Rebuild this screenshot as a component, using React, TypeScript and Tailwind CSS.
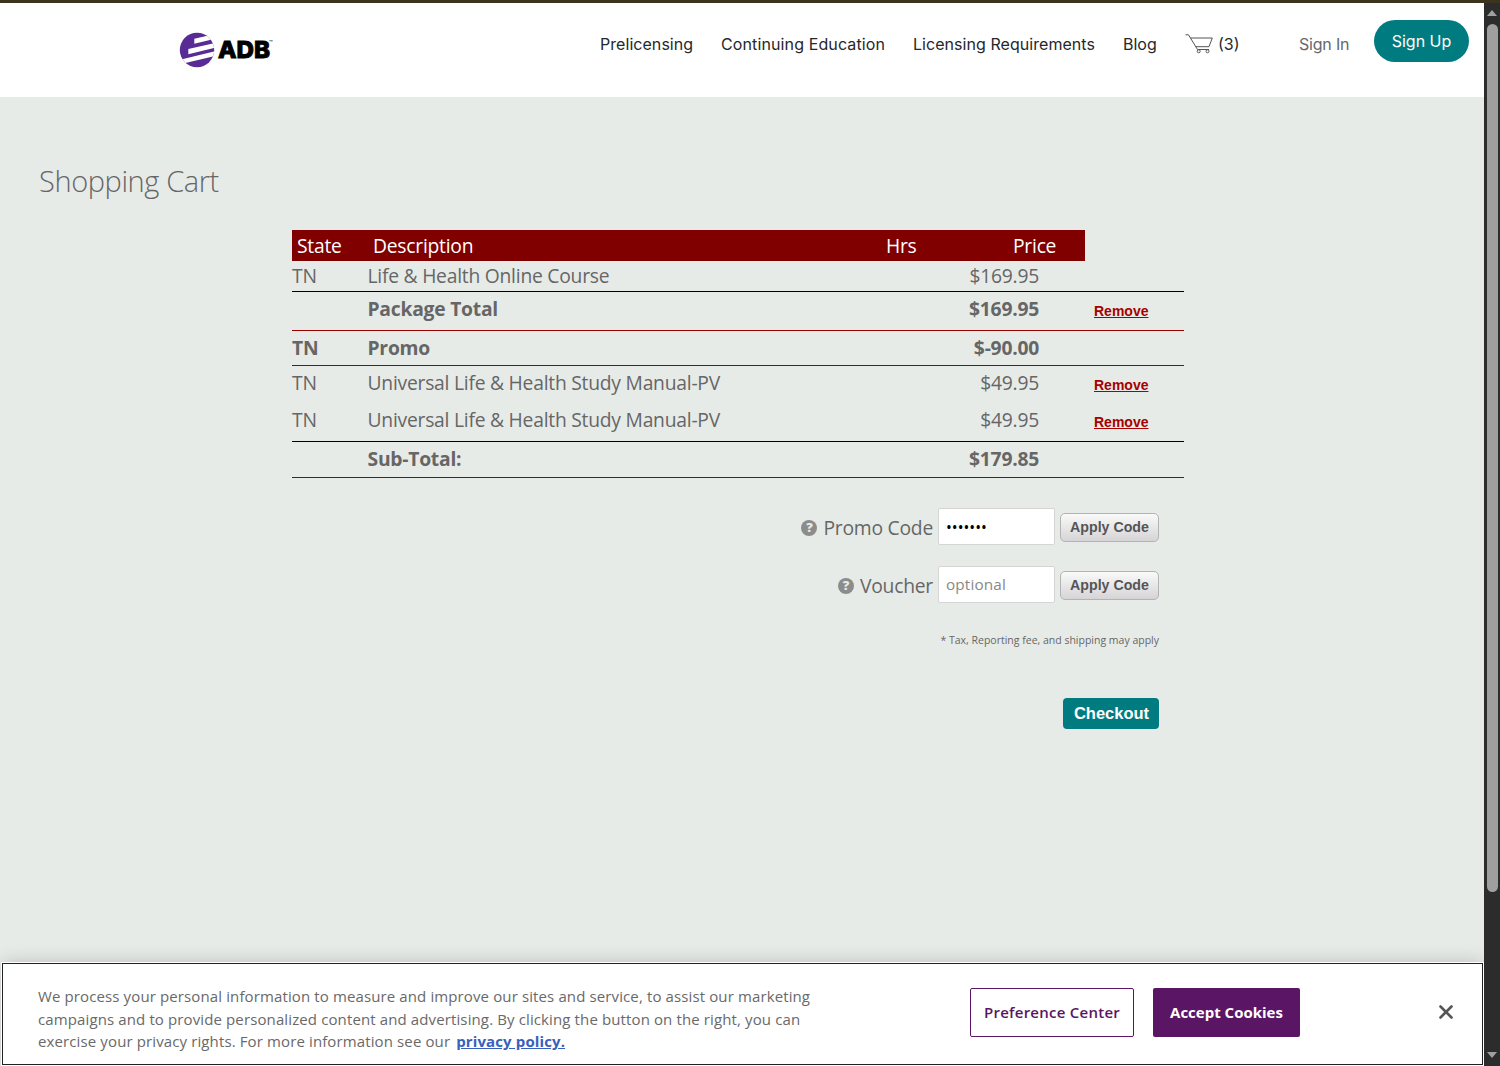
import { ReactNode } from "react";
import { clsx } from "clsx";

type CartRow = {
  state?: string;
  description: string;
  price: string;
  removable?: boolean;
  className: string;
};

const rows: CartRow[] = [
  { state: "TN", description: "Life & Health Online Course", price: "$169.95", className: "h-[31px] border-b border-black" },
  { description: "Package Total", price: "$169.95", removable: true, className: "h-[39px] pb-1 font-bold border-b border-[#990000]" },
  { state: "TN", description: "Promo", price: "$-90.00", className: "h-[35px] font-bold border-b border-[#990000]" },
  { state: "TN", description: "Universal Life & Health Study Manual-PV", price: "$49.95", removable: true, className: "h-[38px] pb-1" },
  { state: "TN", description: "Universal Life & Health Study Manual-PV", price: "$49.95", removable: true, className: "h-[38px] pb-[6px] border-b border-black" },
  { description: "Sub-Total:", price: "$179.85", className: "h-[36px] pb-[2px] font-bold border-b border-[#990000]" },
];

function Logo() {
  return (
    <svg width="96" height="38" viewBox="0 0 96 38" className="ml-[179px] mt-[28px] shrink-0">
      <defs>
        <clipPath id="globe">
          <ellipse cx="18" cy="19" rx="17.2" ry="17.2" />
        </clipPath>
      </defs>
      <g clipPath="url(#globe)">
        <rect width="36" height="38" fill="#592c95" />
        <path d="M15.3 7.800L36 3V7.800L15.300 12.700Z" fill="#fff" />
        <path d="M9.300 18L36 12V16.800L9.300 23.300Z" fill="#fff" />
        <path d="M0 29L36 20.300V25L0 33.500Z" fill="#fff" />
      </g>
      <text x="39" y="27" textLength="52" lengthAdjust="spacingAndGlyphs" fontFamily="Inter, sans-serif" fontWeight="800" fontSize="23.500" stroke="#000" strokeWidth="0.900">ADB</text>
      <text x="90" y="13.500" fontFamily="Inter, sans-serif" fontSize="6">™</text>
    </svg>
  );
}

function CartIcon() {
  return (
    <svg width="28" height="20" viewBox="0 0 28 20" fill="none" stroke="#555" strokeWidth="1">
      <path d="M0.500 0.800H3.500L12.500 15.500H24M5.500 4H27.300L24 12.700H10.800" />
      <circle cx="13.700" cy="17.300" r="1.500" />
      <circle cx="22.500" cy="17.300" r="1.500" />
    </svg>
  );
}

function Header() {
  return (
    <header className="flex h-[94px] shrink-0 bg-white font-['Inter'] text-[16px] leading-[22px] text-[#26272b]">
      <Logo />
      <nav className="ml-[325px] mt-[30px] flex h-[22px] items-center whitespace-nowrap">
        <a className="w-[121px] tracking-[0.05px]">Prelicensing</a>
        <a className="w-[192px] tracking-[0.12px]">Continuing Education</a>
        <a className="w-[210px] tracking-[0.05px]">Licensing Requirements</a>
        <a className="w-[62px]">Blog</a>
        <a className="flex w-[114px] items-center gap-[5px]"><CartIcon />(3)</a>
        <a className="w-[75px] tracking-[-0.2px] text-[#65676b]">Sign In</a>
      </nav>
      <button className="mt-[17px] h-[42px] w-[95px] rounded-full bg-[#007c80] text-white">Sign Up</button>
    </header>
  );
}

function CartTable() {
  return (
    <section className="ml-[292px] mt-[28px] w-[892px] text-[19.300px] leading-[26px] tracking-[-0.240px]">
      <div className="flex h-[31px] w-[793px] items-center bg-[#800000] text-white">
        <span className="w-[81px] pl-[5px]">State</span>
        <span className="w-[513px]">Description</span>
        <span className="w-[127px]">Hrs</span>
        <span>Price</span>
      </div>
      {rows.map((row, i) => (
        <div key={i} className={clsx("flex items-center", row.className)}>
          <span className="w-[75.500px]">{row.state}</span>
          <span className="w-[571.500px]">{row.description}</span>
          <span className="w-[100px] text-right">{row.price}</span>
          {row.removable && (
            <a className="ml-[55px] mt-1 font-['Liberation_Sans'] text-[14px] font-bold leading-5 tracking-normal text-[#a60000] underline">Remove</a>
          )}
        </div>
      ))}
    </section>
  );
}

function CodeRow({ label, children }: { label: string; children: ReactNode }) {
  return (
    <div className="flex h-[37px] items-center justify-end">
      <span className="mr-[6px] mt-[2px] flex size-4 items-center justify-center rounded-full bg-[#8c8c8c] font-['Open_Sans'] text-[13px] font-extrabold leading-none text-[#e6ebe8]">?</span>
      <label className="mr-[5px] mt-[3px] text-[19.300px] tracking-[-0.240px]">{label}</label>
      {children}
      <button className="ml-[5px] mt-[2px] h-[29px] w-[99px] rounded-[5px] border border-[#b3b3b3] bg-linear-to-b from-[#fafafa] to-[#d6d4d6] font-['Liberation_Sans'] text-[14.200px] font-bold text-[#555]">Apply Code</button>
    </div>
  );
}

function CookieBanner() {
  return (
    <div className="mb-[1px] ml-[2px] mr-[1px] flex h-[102px] shrink-0 border border-[#222] bg-white shadow-[0_0_18px_rgba(0,0,0,0.2)] outline outline-white">
      <p className="ml-[35px] mt-[21px] w-[800px] text-[15px] leading-[22.700px] tracking-[0.120px] text-[#696969]">
        We process your personal information to measure and improve our sites and service, to assist our marketing
        <br />
        campaigns and to provide personalized content and advertising. By clicking the button on the right, you can
        <br />
        exercise your privacy rights. For more information see our <a className="ml-[2px] font-bold text-[#3860be] underline">privacy policy.</a>
      </p>
      <button className="ml-[132px] mt-6 h-[49px] w-[164px] rounded-[2px] border border-[#5a1664] text-[15px] font-semibold tracking-[0.250px] text-[#5a1664]">Preference Center</button>
      <button className="ml-[19px] mt-6 h-[49px] w-[147px] rounded-[2px] bg-[#5a1664] text-[15px] font-bold text-white">Accept Cookies</button>
      <svg width="14" height="14" viewBox="0 0 14 14" className="ml-[139px] mt-[41px]" stroke="#565656" strokeWidth="2.600" strokeLinecap="round">
        <path d="M1.500 1.500L12.500 12.500M12.500 1.500L1.500 12.500" />
      </svg>
    </div>
  );
}

function Scrollbar() {
  return (
    <div className="flex w-4 shrink-0 flex-col items-center bg-[#2c2c2c]">
      <svg width="10" height="6" viewBox="0 0 10 6" className="mt-[7px] shrink-0" fill="#a0a0a0"><path d="M5 0L10 6H0Z" /></svg>
      <div className="ml-[1px] mt-2 h-[868px] w-[11px] rounded-full bg-[#9f9f9f]" />
      <svg width="10" height="6" viewBox="0 0 10 6" className="mb-2 mt-auto shrink-0" fill="#a0a0a0"><path d="M0 0H10L5 6Z" /></svg>
    </div>
  );
}

export default function App() {
  return (
    <div className="flex h-[1066px] w-[1500px] flex-col overflow-hidden bg-[#e6ebe8] font-['Open_Sans'] text-[#666]">
      <div className="h-[3px] shrink-0 bg-[#3c341f]" />
      <div className="flex min-h-0 flex-1">
        <div className="flex w-[1484px] flex-col">
          <Header />
          <main className="flex-1">
            <h1 className="ml-[39px] mt-[63px] text-[29px] font-light leading-[42px] tracking-[-0.400px]">Shopping Cart</h1>
            <CartTable />
            <section className="ml-[700px] mt-[30px] w-[459px]">
              <CodeRow label="Promo Code">
                <input type="password" defaultValue="1234567" className="h-[37px] w-[117px] rounded-[2px] border border-[#d5d5d5] bg-white px-[7px] text-[15.500px] text-black" />
              </CodeRow>
              <div className="h-[21px]" />
              <CodeRow label="Voucher">
                <input type="text" placeholder="optional" className="h-[37px] w-[117px] rounded-[2px] border border-[#d5d5d5] bg-white px-[7px] pb-[2px] text-[15.300px] tracking-[0.150px] placeholder:text-[#888]" />
              </CodeRow>
              <p className="mt-[29px] text-right text-[10.500px] leading-4">* Tax, Reporting fee, and shipping may apply</p>
              <div className="mt-[50px] flex justify-end">
                <button className="h-[31px] w-[96px] rounded-[4px] bg-[#007c80] pl-[1px] font-['Liberation_Sans'] text-[16.500px] font-bold text-white">Checkout</button>
              </div>
            </section>
          </main>
          <CookieBanner />
        </div>
        <Scrollbar />
      </div>
    </div>
  );
}
